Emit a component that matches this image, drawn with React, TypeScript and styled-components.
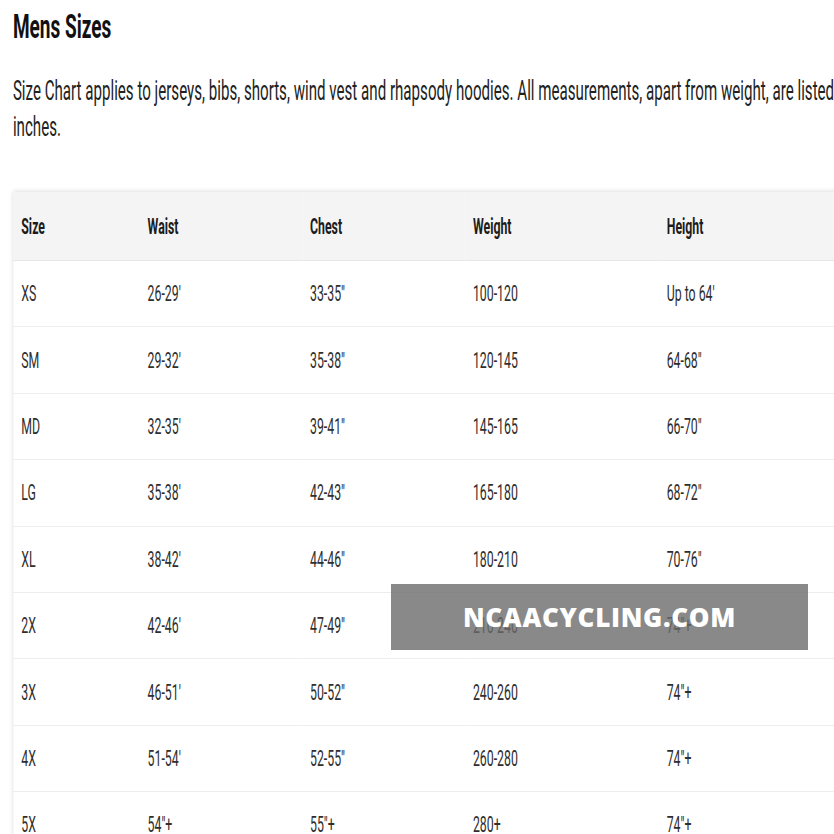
import styled, { createGlobalStyle } from "styled-components";

// the source picture is squeezed sideways, so the page is laid out wide and scaled in x
const SQUEEZE = 0.56;

const GlobalStyle = createGlobalStyle`
  html, body {
    margin: 0;
    background: #fff;
    overflow: hidden;
  }
  body {
    font-family: Roboto, "Liberation Sans", sans-serif;
  }
`;

const Screen = styled.div`
  position: relative;
  width: 834px;
  height: 834px;
  overflow: hidden;
`;

const Page = styled.div`
  width: ${834 / SQUEEZE}px;
  box-sizing: border-box;
  padding: 6px 0 0 23px;
  transform: scaleX(${SQUEEZE});
  transform-origin: 0 0;
`;

const Title = styled.h2`
  margin: 0 0 27px;
  font-size: 34px;
  line-height: 40px;
  font-weight: 700;
  color: #111;
`;

const Intro = styled.p`
  margin: 0 0 47px;
  font-size: 27px;
  line-height: 36px;
  color: #222;
  white-space: nowrap;
`;

const Table = styled.table`
  width: 1700px;
  border-collapse: collapse;
  border-left: 1px solid #ececec;
  box-shadow: 0 -1px 6px rgba(0, 0, 0, 0.12);
`;

const HeadCell = styled.th`
  height: 68px;
  padding: 0 0 0 14px;
  background: #f4f4f4;
  border-bottom: 1px solid #e6e6e6;
  text-align: left;
  font-size: 22px;
  font-weight: 700;
  color: #1c1c1c;
`;

const Cell = styled.td`
  height: 65.4px;
  padding: 0 0 0 14px;
  background: #fff;
  border-bottom: 1px solid #ededed;
  font-size: 22px;
  color: #2e2e2e;
  white-space: nowrap;
`;

const Watermark = styled.div`
  position: absolute;
  left: 391px;
  top: 584px;
  width: 417px;
  height: 66px;
  display: flex;
  align-items: center;
  justify-content: center;
  background: rgba(108, 108, 108, 0.8);
  color: #fff;
  font-family: "Open Sans", sans-serif;
  font-weight: 800;
  font-size: 26px;
  letter-spacing: 0.7px;
`;

const columns = [226, 290, 291, 346];
const headers = ["Size", "Waist", "Chest", "Weight", "Height"];

const rows = [
  ["XS", "26-29'", '33-35"', "100-120", "Up to 64'"],
  ["SM", "29-32'", '35-38"', "120-145", '64-68"'],
  ["MD", "32-35'", '39-41"', "145-165", '66-70"'],
  ["LG", "35-38'", '42-43"', "165-180", '68-72"'],
  ["XL", "38-42'", '44-46"', "180-210", '70-76"'],
  ["2X", "42-46'", '47-49"', "210-240", '74"+'],
  ["3X", "46-51'", '50-52"', "240-260", '74"+'],
  ["4X", "51-54'", '52-55"', "260-280", '74"+'],
  ["5X", '54"+', '55"+', "280+", '74"+'],
];

const App = () => {
  return (
    <Screen>
      <GlobalStyle />
      <Page>
        <Title>Mens Sizes</Title>
        <Intro>
          Size Chart applies to jerseys, bibs, shorts, wind vest and rhapsody
          hoodies. All measurements, apart from weight, are listed in
          <br />
          inches.
        </Intro>
        <Table>
          <colgroup>
            {columns.map((w, i) => (
              <col key={i} style={{ width: w }} />
            ))}
            <col />
          </colgroup>
          <thead>
            <tr>
              {headers.map((h) => (
                <HeadCell key={h}>{h}</HeadCell>
              ))}
            </tr>
          </thead>
          <tbody>
            {rows.map((r) => (
              <tr key={r[0]}>
                {r.map((v, i) => (
                  <Cell key={i}>{v}</Cell>
                ))}
              </tr>
            ))}
          </tbody>
        </Table>
      </Page>
      <Watermark>NCAACYCLING.COM</Watermark>
    </Screen>
  );
};

export default App;
